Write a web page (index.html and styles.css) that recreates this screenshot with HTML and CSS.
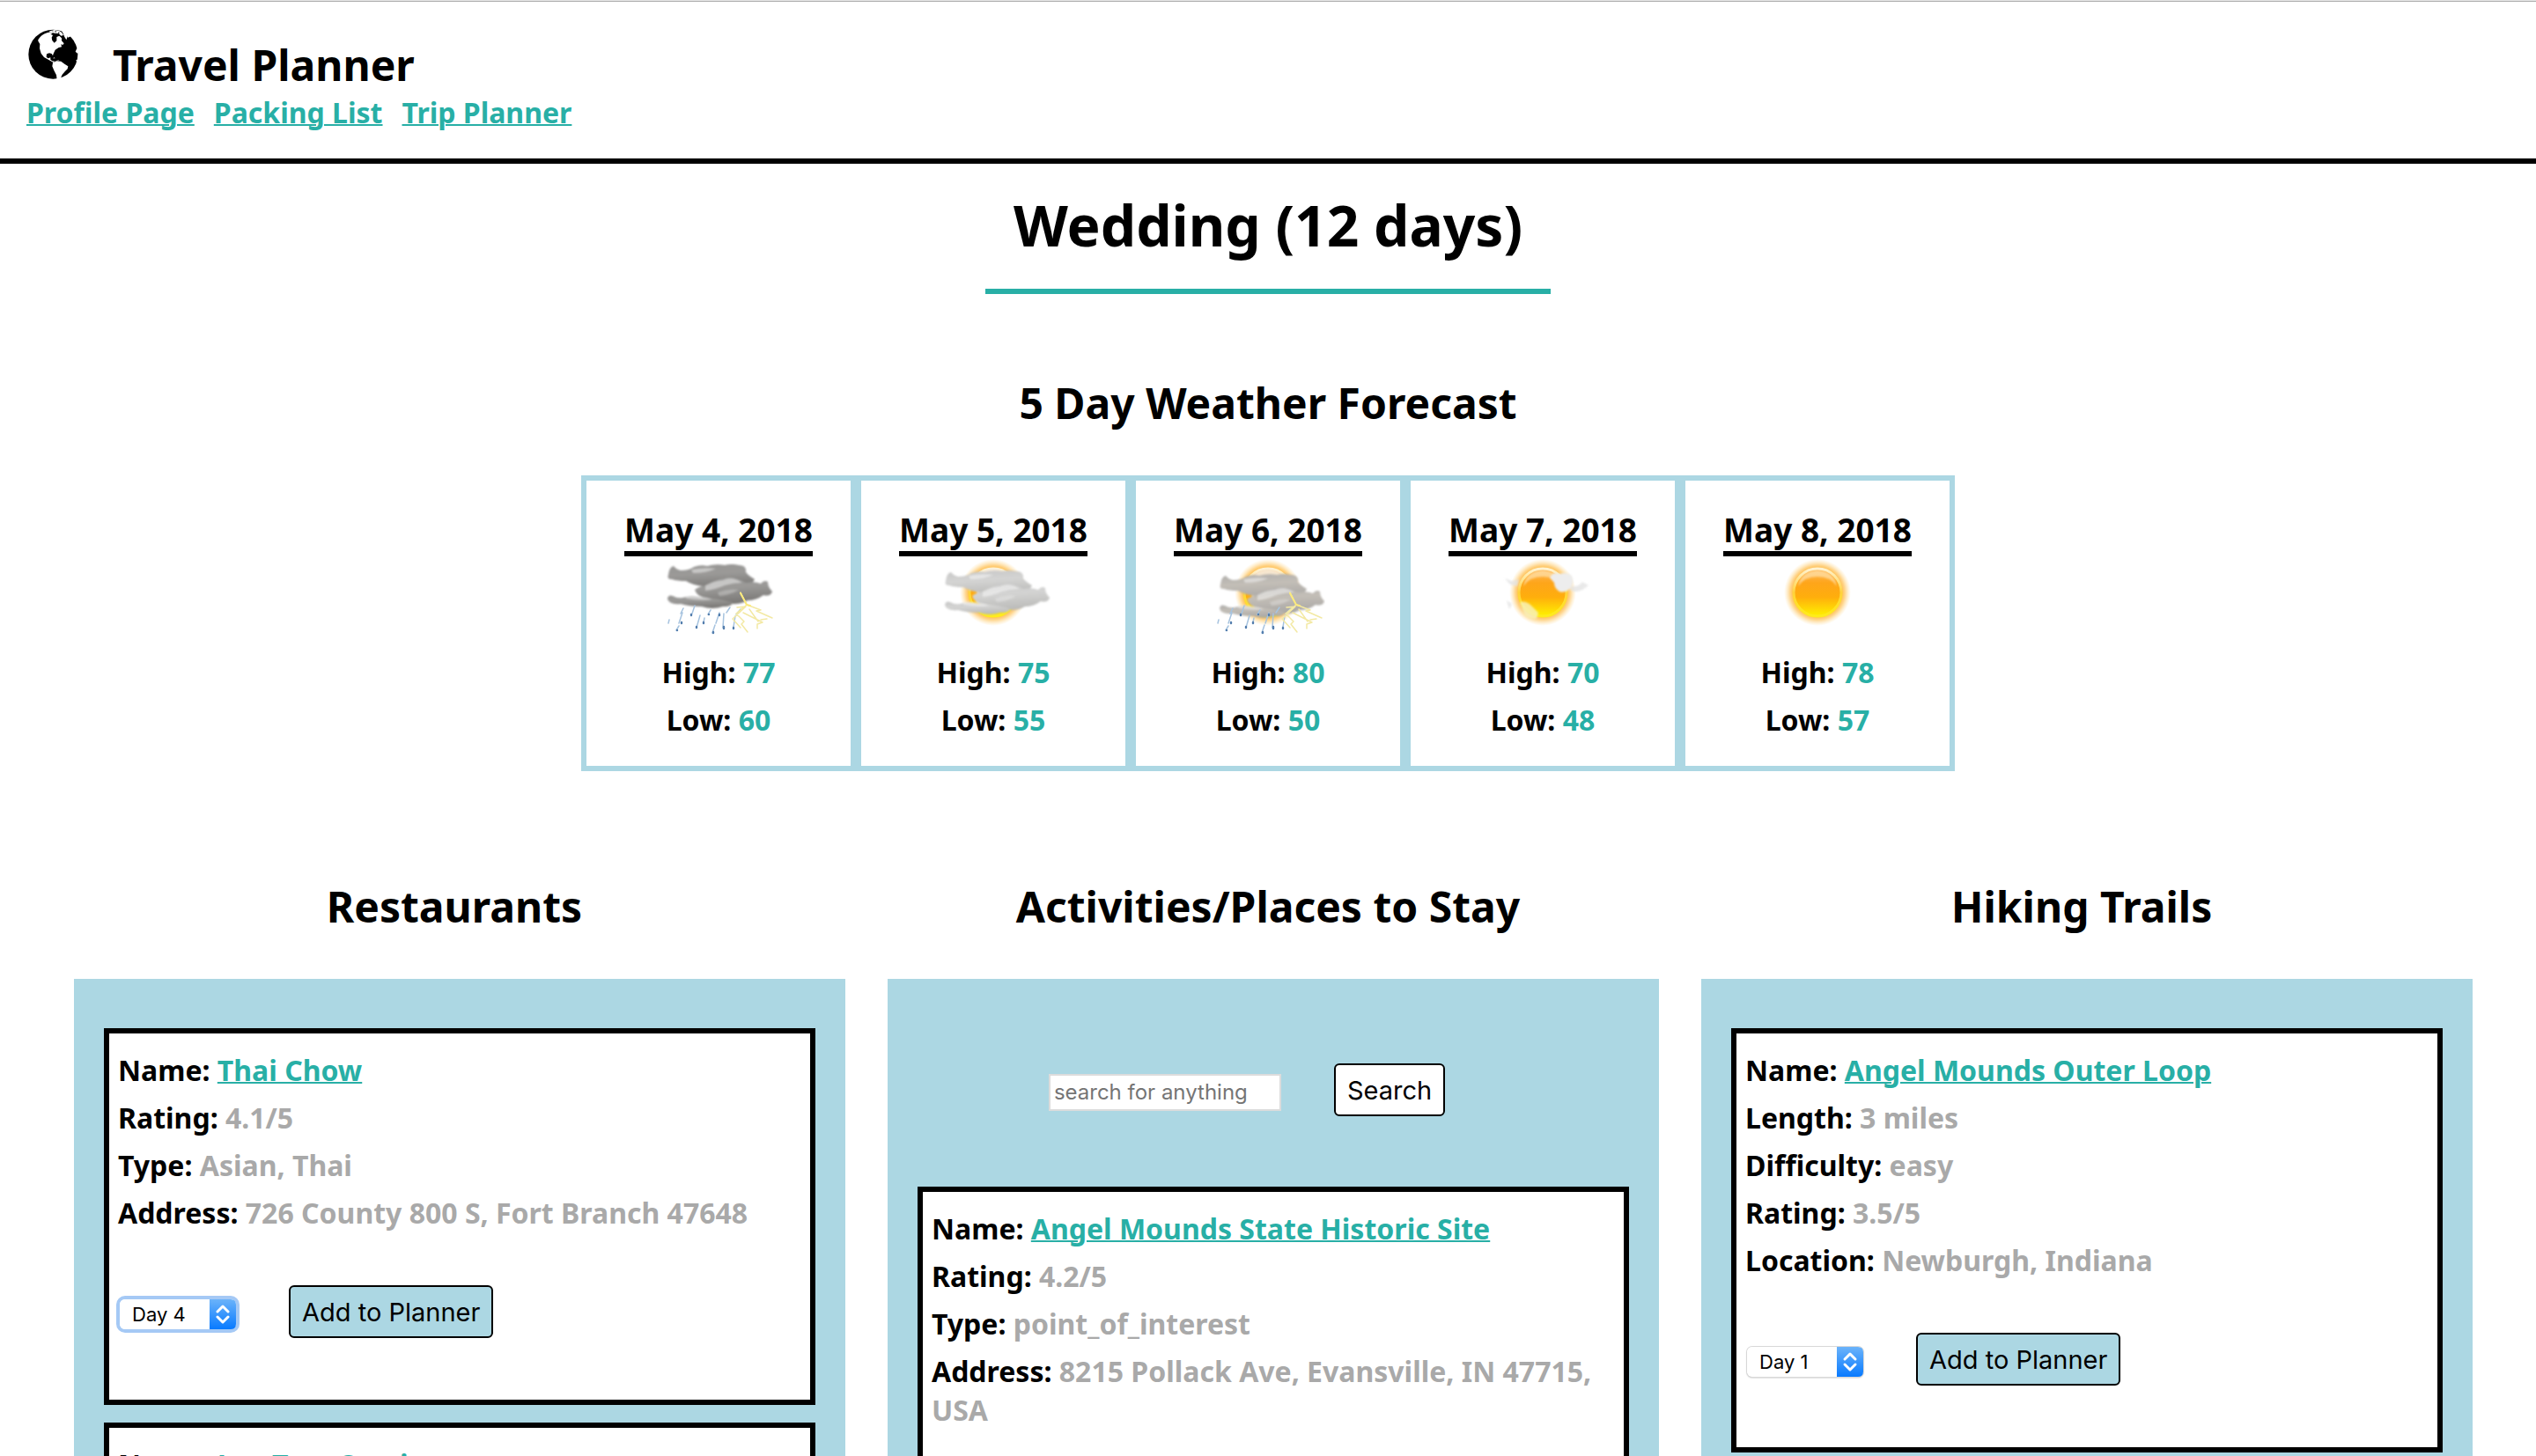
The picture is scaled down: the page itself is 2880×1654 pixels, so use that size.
FILE: index.html
```html
<!DOCTYPE html>
<html lang="en">
<head>
<meta charset="utf-8">
<meta name="viewport" content="width=device-width, initial-scale=1">
<title>Travel Planner</title>
<link rel="stylesheet" href="styles.css">
</head>
<body>
<svg class="defs" width="0" height="0" aria-hidden="true">
  <defs>
    <radialGradient id="glow">
      <stop offset="0.7" stop-color="#ffb638"/>
      <stop offset="0.82" stop-color="#ffc766" stop-opacity="0.75"/>
      <stop offset="1" stop-color="#ffdf9c" stop-opacity="0"/>
    </radialGradient>
    <linearGradient id="disc" x1="0" y1="0" x2="0" y2="1">
      <stop offset="0" stop-color="#ffb95c"/>
      <stop offset="0.3" stop-color="#fea51a"/>
      <stop offset="0.6" stop-color="#ffae0c"/>
      <stop offset="1" stop-color="#fff200"/>
    </linearGradient>
    <linearGradient id="rim" x1="0" y1="0" x2="0" y2="1">
      <stop offset="0" stop-color="#fff3d2"/>
      <stop offset="0.5" stop-color="#ffd23c"/>
      <stop offset="1" stop-color="#ffec1a"/>
    </linearGradient>
    <linearGradient id="dark" x1="0" y1="0" x2="0.2" y2="1">
      <stop offset="0" stop-color="#969593"/>
      <stop offset="0.45" stop-color="#9b9a98"/>
      <stop offset="1" stop-color="#7b7977"/>
    </linearGradient>
    <linearGradient id="light" x1="0" y1="0" x2="0.2" y2="1">
      <stop offset="0" stop-color="#c6c6c6"/>
      <stop offset="0.45" stop-color="#d4d4d3"/>
      <stop offset="1" stop-color="#bcbcba"/>
    </linearGradient>
    <linearGradient id="mid" x1="0" y1="0" x2="0.2" y2="1">
      <stop offset="0" stop-color="#aeadab"/>
      <stop offset="0.45" stop-color="#c3beb7"/>
      <stop offset="1" stop-color="#aba9a6"/>
    </linearGradient>
    <linearGradient id="blue" x1="0" y1="0" x2="0" y2="1">
      <stop offset="0" stop-color="#6bb3fa"/>
      <stop offset="1" stop-color="#087aff"/>
    </linearGradient>
    <filter id="soft" x="-20%" y="-20%" width="140%" height="140%"><feGaussianBlur stdDeviation="1.2"/></filter>
    <symbol id="sun" viewBox="0 0 130 100">
      <circle cx="65" cy="41" r="38" fill="url(#glow)"/>
      <circle cx="65" cy="41" r="27" fill="url(#disc)" stroke="url(#rim)" stroke-width="3"/>
      <path d="M43 34Q46 17 65 16Q84 17 87 34Q80 23 65 23Q50 23 43 34Z" fill="#ffe3ae" opacity="0.7" filter="url(#soft)"/>
    </symbol>
    <g id="clouds">
      <path d="M8 21Q9 12 14 11Q17 15 22 16Q32 16 37 12Q45 9 52 11Q62 8 72 10Q80 8 88 10Q97 10 96 18Q99 22 106 26Q104 32 92 36Q70 40 48 34Q36 33 28 28Q18 28 12 26Q6 26 8 21Z"/>
      <path d="M38 38Q44 33 54 33Q64 25 76 24Q88 25 96 30Q106 28 113 31Q117 26 121 29Q121 35 126 40Q124 46 116 44Q108 50 98 50Q88 56 74 53Q58 54 50 48Q40 45 38 38Z"/>
      <path d="M7 48Q8 43 13 45Q18 48 24 47Q34 44 46 47Q58 47 80 52Q82 57 70 57Q58 61 46 57Q32 57 22 54Q8 55 7 48Z"/>
    </g>
    <g id="shine" fill="#ffffff" opacity="0.45" filter="url(#soft)">
      <path d="M50 33Q58 28 70 27Q80 22 92 30Q82 30 72 33Q60 38 50 39Z"/>
      <path d="M34 15Q48 12 62 14Q52 19 36 19Z"/>
      <path d="M28 45Q44 44 58 49Q44 51 28 48Z"/>
      <path d="M64 41Q76 36 88 38Q78 44 66 45Z" opacity="0.6"/>
    </g>
    <g id="rain" fill="none" stroke-linecap="round">
      <g stroke="#a6c3df" stroke-width="1.5">
        <path d="M25 59l-3 6M9 72l-1 4M24 64l-4 12M20 79l-3 5M38 56l-3 9M44 67l-4 14M49 70l-1 5M56 61l-3 5M66 64l-4 12M61 78l-3 9M71 65l-1 16M84 68l-2 12M90 60l-5 6M78 58l-4 6"/>
      </g>
      <g stroke="#557fae" stroke-width="2.4">
        <path d="M34 66l0 1M23 75l0 1M18 84l0 0M40 80l0 1M54 66l0 0M71 80l0 2M59 86l0 1M82 81l0 1M66 66l0 1M48 75l0 1"/>
      </g>
    </g>
    <g id="bolts" fill="none" stroke="#f3e9a4" stroke-width="1.5" stroke-linejoin="round" stroke-linecap="round">
      <path d="M90 41l7 14l-12 10l9 9l-3 3l7 9M97 55l16 6l-5 1l18 8M93 64l14 7l8 4l-6 2l0 5M113 72l7 -1M86 58l10 -1l-15 14l9 10M100 60l10 14"/>
      <path d="M90 42l7 13l4 1" stroke="#fbea7c" stroke-width="2"/>
    </g>
  </defs>
</svg>

<header class="site-header">
  <div class="brand">
    <svg class="globe" viewBox="30 96 180 180" aria-hidden="true">
      <circle cx="121" cy="185" r="84"/>
      <g fill="#fff">
        <path d="M70 135Q80 119 100 112L112 109L120 113L112 116L120 120L116 128L118 138L125 146L133 139L133 126L142 122L150 130L150 139L158 148L154 153L148 151L150 160L140 162L128 170L122 183L120 190L116 183L108 181L99 184L98 194L104 199L112 196L112 203L118 208L127 209L122 213L106 204L90 195L80 182L75 165L76 150L70 140Z"/>
        <path d="M105 107L124 102L140 104L150 110L156 120L148 122L140 114L126 113Z"/>
        <path d="M146 98L164 106L171 122L166 136L160 126L154 112Z"/>
        <path d="M164 112L172 128L184 122L174 112Z"/>
        <path d="M120 214L132 208L148 209L160 218L172 226L170 235L161 244L152 254L146 268L134 272L132 256L124 240L118 226Z"/>
        <path d="M194 144L200 150L208 142L200 134ZM197 176L204 182L208 172L202 164ZM198 206L205 212L210 200Z"/>
      </g>
      <path d="M104 105l6 2l-4 2zM126 106l8 1l-5 3zM138 109l6 3l-5 2zM118 104l5 1l-4 2zM118 128l8 -3l6 3l-2 9l-6 3l-6-5zM134 120l6 -2l3 3zM112 194l8 2l-2 2zM124 201l12 2l-10 1z"/>
      <path d="M120 199l8 0l-3 -3zM132 207l10 -2l-4 3z" fill="#fff"/>
    </svg>
    <p class="brand-name">Travel Planner</p>
  </div>
  <nav class="site-nav">
    <a href="#profile">Profile Page</a>
    <a href="#packing">Packing List</a>
    <a href="#planner">Trip Planner</a>
  </nav>
</header>

<main>
  <h1 class="trip-title">Wedding (12 days)</h1>

  <section>
    <h2 class="section-title">5 Day Weather Forecast</h2>
    <div class="forecast">
      <article class="day">
        <h3 class="day-date">May 4, 2018</h3>
        <svg class="day-icon" viewBox="0 0 130 100" role="img" aria-label="Thunderstorms">
          <g filter="url(#soft)"><use href="#clouds" fill="url(#dark)"/></g>
          <use href="#shine"/>
          <use href="#rain"/>
          <use href="#bolts"/>
        </svg>
        <p class="temp">High: <span>77</span></p>
        <p class="temp">Low: <span>60</span></p>
      </article>
      <article class="day">
        <h3 class="day-date">May 5, 2018</h3>
        <svg class="day-icon" viewBox="0 0 130 100" role="img" aria-label="Mostly cloudy">
          <use href="#sun"/>
          <path d="M41 30Q50 14 65 14Q82 15 88 30Q92 44 84 56L60 58L46 52Q50 40 41 30Z" fill="#f4efe9" opacity="0.9" filter="url(#soft)"/>
          <g transform="translate(3 7)">
            <g filter="url(#soft)"><use href="#clouds" fill="url(#light)"/></g>
            <use href="#shine"/>
          </g>
        </svg>
        <p class="temp">High: <span>75</span></p>
        <p class="temp">Low: <span>55</span></p>
      </article>
      <article class="day">
        <h3 class="day-date">May 6, 2018</h3>
        <svg class="day-icon" viewBox="0 0 130 100" role="img" aria-label="Chance of thunderstorms">
          <use href="#sun"/>
          <path d="M41 30Q50 14 65 14Q82 15 88 30Q92 44 84 56L60 58L46 52Q50 40 41 30Z" fill="#f6ebdc" opacity="0.85" filter="url(#soft)"/>
          <g transform="translate(3 11)">
            <g filter="url(#soft)"><use href="#clouds" fill="url(#mid)"/></g>
            <use href="#shine"/>
          </g>
          <use href="#rain"/>
          <use href="#bolts"/>
        </svg>
        <p class="temp">High: <span>80</span></p>
        <p class="temp">Low: <span>50</span></p>
      </article>
      <article class="day">
        <h3 class="day-date">May 7, 2018</h3>
        <svg class="day-icon" viewBox="0 0 130 100" role="img" aria-label="Mostly sunny">
          <use href="#sun"/>
          <g filter="url(#soft)">
            <path d="M73 24Q77 17 84 20Q92 17 98 22Q101 30 97 36Q90 42 84 40Q78 36 78 30Z" fill="#ededed"/>
            <path d="M98 34Q106 35 110 29L117 33L110 38Q102 42 96 38ZM22 25L30 28L38 26L36 34L28 32ZM24 50L30 54L27 60Z" fill="#e4e4e4" opacity="0.8"/>
            <path d="M39 52Q46 50 52 56L60 64L58 71Q48 72 44 66Z" fill="#f8f0b8" opacity="0.85"/>
          </g>
        </svg>
        <p class="temp">High: <span>70</span></p>
        <p class="temp">Low: <span>48</span></p>
      </article>
      <article class="day">
        <h3 class="day-date">May 8, 2018</h3>
        <svg class="day-icon" viewBox="0 0 130 100" role="img" aria-label="Sunny">
          <use href="#sun"/>
        </svg>
        <p class="temp">High: <span>78</span></p>
        <p class="temp">Low: <span>57</span></p>
      </article>
    </div>
  </section>

  <div class="columns">
    <section>
      <h2 class="section-title">Restaurants</h2>
      <div class="panel">
        <article class="card">
          <p>Name: <a href="#thai-chow">Thai Chow</a></p>
          <p>Rating: <span>4.1/5</span></p>
          <p>Type: <span>Asian, Thai</span></p>
          <p>Address: <span>726 County 800 S, Fort Branch 47648</span></p>
          <form class="card-form">
            <div class="select select-active">
              <select aria-label="Day for Thai Chow"><option>Day 4</option></select>
              <svg viewBox="0 0 30 34" aria-hidden="true"><path class="face" d="M0 0H24Q30 0 30 6V28Q30 34 24 34H0Z"/><path class="chevrons" d="M9 14L15 8L21 14M9 20L15 26L21 20"/></svg>
            </div>
            <button class="btn" type="button">Add to Planner</button>
          </form>
        </article>
        <article class="card">
          <p>Name: <a href="#los-tres-caminos">Los Tres Caminos</a></p>
        </article>
      </div>
    </section>

    <section>
      <h2 class="section-title">Activities/Places to Stay</h2>
      <div class="panel">
        <form class="search">
          <input type="text" placeholder="search for anything" aria-label="Search activities">
          <button class="btn btn-plain" type="button">Search</button>
        </form>
        <article class="card">
          <p>Name: <a href="#angel-mounds-site">Angel Mounds State Historic Site</a></p>
          <p>Rating: <span>4.2/5</span></p>
          <p>Type: <span>point_of_interest</span></p>
          <p>Address: <span>8215 Pollack Ave, Evansville, IN 47715, USA</span></p>
        </article>
      </div>
    </section>

    <section>
      <h2 class="section-title">Hiking Trails</h2>
      <div class="panel">
        <article class="card">
          <p>Name: <a href="#angel-mounds-loop">Angel Mounds Outer Loop</a></p>
          <p>Length: <span>3 miles</span></p>
          <p>Difficulty: <span>easy</span></p>
          <p>Rating: <span>3.5/5</span></p>
          <p>Location: <span>Newburgh, Indiana</span></p>
          <form class="card-form">
            <div class="select">
              <select aria-label="Day for Angel Mounds Outer Loop"><option>Day 1</option></select>
              <svg viewBox="0 0 30 34" aria-hidden="true"><path class="face" d="M0 0H24Q30 0 30 6V28Q30 34 24 34H0Z"/><path class="chevrons" d="M9 14L15 8L21 14M9 20L15 26L21 20"/></svg>
            </div>
            <button class="btn" type="button">Add to Planner</button>
          </form>
        </article>
      </div>
    </section>
  </div>
</main>
</body>
</html>
```

FILE: styles.css
```css
:root {
  --teal: #28afa6;
  --sky: #acd7e3;
  --gray: #a9a9a9;
}

* { box-sizing: border-box; }

body {
  margin: 0;
  border-top: 1px solid #e8e8e8;
  background: #fff;
  color: #000;
  font: bold 32px/44px "Noto Sans", sans-serif;
}

h1, h2, h3, p { margin: 0; }

a {
  color: var(--teal);
  text-decoration-thickness: 2px;
}

.defs { position: absolute; }

/* Header */
.site-header {
  padding: 30px;
  border-top: 1px solid #acacac;
  border-bottom: 6px solid #000;
}

.brand {
  display: flex;
  gap: 38px;
}

.globe {
  width: 60px;
  height: 60px;
}

.brand-name {
  margin-top: 10px;
  font-size: 48px;
  line-height: 64px;
}

.site-nav {
  display: flex;
  gap: 22px;
}

/* Trip title and forecast */
.trip-title {
  width: fit-content;
  margin: 26px auto 90px;
  padding: 0 32px 28px;
  border-bottom: 6px solid var(--teal);
  font-size: 64px;
  line-height: 88px;
}

.section-title {
  margin-bottom: 48px;
  font-size: 48px;
  line-height: 68px;
  text-align: center;
}

.forecast {
  display: flex;
  justify-content: center;
}

.day {
  display: flex;
  flex-direction: column;
  align-items: center;
  width: 312px;
  padding: 32px 20px 30px;
  border: 6px solid var(--sky);
}

.day-date {
  border-bottom: 6px solid #000;
  font-size: 37px;
  line-height: 48px;
}

.day-icon {
  width: 130px;
  height: 100px;
}

.temp { margin-top: 10px; }
.temp span { color: var(--teal); }

/* Result columns */
.columns {
  display: grid;
  grid-template-columns: repeat(3, 1fr);
  gap: 36px;
  margin-top: 120px;
  padding: 0 72px;
}

.panel {
  margin-left: 12px;
  padding: 56px 34px;
  background: var(--sky);
}

.card {
  margin-bottom: 20px;
  padding: 20px 10px 70px;
  border: 6px solid #000;
  background: #fff;
}

.card p { margin-bottom: 10px; }
.card span { color: var(--gray); }

.card-form,
.search {
  display: flex;
  align-items: baseline;
  gap: 60px;
}

.card-form {
  margin-top: 60px;
  padding-left: 2px;
}

.search {
  justify-content: center;
  margin: 40px 0 80px;
  padding-right: 60px;
}

.btn {
  height: 60px;
  padding: 2px 13px 0;
  border: 2px solid #000;
  border-radius: 6px;
  background: var(--sky);
  color: #000;
  font: 29px/54px Inter, sans-serif;
}

.btn-plain { background: #fff; }

.search input {
  width: 264px;
  height: 42px;
  padding: 0 4px;
  border: 2px solid #dcdcdc;
  background: #fff;
  font: 24px/38px Inter, sans-serif;
}

.search input::placeholder { color: #757575; }

.select {
  position: relative;
  height: 34px;
  border-radius: 6px;
  box-shadow: 0 0 0 1px #d8d8d8, 0 1px 2px rgba(0, 0, 0, 0.35);
}

.select-active { box-shadow: 0 0 0 4px #a5c9f5; }

.select select {
  display: block;
  width: 132px;
  height: 34px;
  padding: 0 0 0 14px;
  border: 0;
  border-radius: 6px;
  appearance: none;
  background: #fff;
  color: #000;
  font: 22px/34px Inter, sans-serif;
}

.select svg {
  position: absolute;
  top: 0;
  right: 0;
  width: 30px;
  height: 34px;
  pointer-events: none;
}

.face { fill: url(#blue); }

.chevrons {
  fill: none;
  stroke: #fff;
  stroke-width: 3;
  stroke-linecap: round;
  stroke-linejoin: round;
}
```
